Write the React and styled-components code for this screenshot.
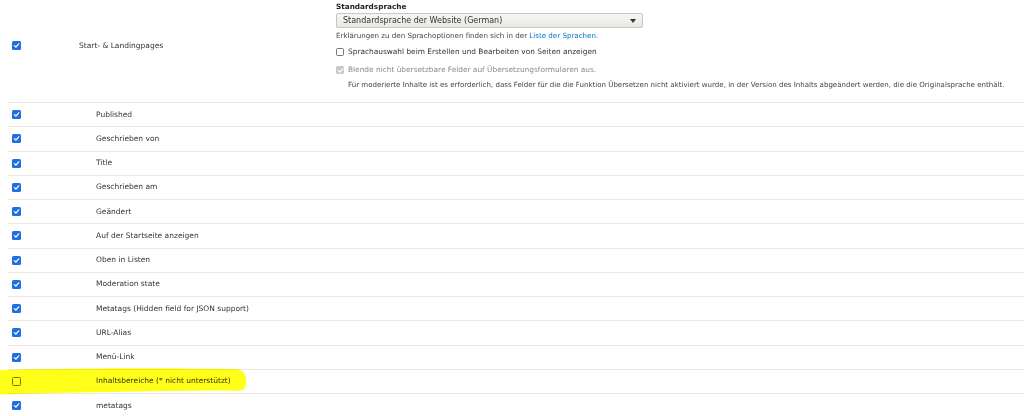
import React from "react";
import styled, { createGlobalStyle, css } from "styled-components";

const Global = createGlobalStyle`
  html, body { margin: 0; padding: 0; background: #fff; }
  body { font-family: "DejaVu Sans", "Liberation Sans", sans-serif; color: #333; overflow: hidden; }
  * { box-sizing: border-box; }
`;

const Page = styled.div`
  position: relative;
  width: 1024px;
  height: 416px;
  overflow: hidden;
  padding-left: 8px;
`;

const Row = styled.div`
  display: grid;
  grid-template-columns: 71px 257px 1fr;
  align-items: center;
  border-bottom: 1px solid #ebe9e4;
  ${(p) =>
    p.$main
      ? css`
          height: 103px;
          padding-bottom: 11px;
        `
      : css`
          height: 24.25px;
        `}
`;

const BoxCell = styled.div`
  display: flex;
  align-items: center;
  padding-left: 4px;
`;

const Label = styled.div`
  font-size: 7.5px;
  line-height: 10px;
  color: #333;
  padding-left: ${(p) => (p.$indent ? "17px" : "0")};
  white-space: nowrap;
`;

const Box = styled.span`
  display: inline-flex;
  align-items: center;
  justify-content: center;
  width: ${(p) => p.$size || 9}px;
  height: ${(p) => p.$size || 9}px;
  border-radius: 1.5px;
  flex: none;
  ${(p) =>
    p.$checked
      ? css`
          background: ${p.$disabled ? "#c9c9c9" : "#1f6fe1"};
          border: none;
        `
      : css`
          background: #fff;
          border: 1px solid #767676;
        `}
`;

const Check = ({ checked, disabled, size }) => (
  <Box $checked={checked} $disabled={disabled} $size={size}>
    {checked && (
      <svg width="7" height="7" viewBox="0 0 10 10">
        <path d="M2 5.2 L4.1 7.3 L8.2 2.6" fill="none" stroke="#fff" strokeWidth="1.8" strokeLinecap="round" strokeLinejoin="round" />
      </svg>
    )}
  </Box>
);

const Settings = styled.div`
  display: flex;
  flex-direction: column;
  padding-top: 2px;
  align-self: start;
`;

const FieldTitle = styled.div`
  font-size: 7.3px;
  font-weight: bold;
  line-height: 10px;
  color: #222;
`;

const Select = styled.div`
  margin-top: 1px;
  width: 307px;
  height: 15px;
  border: 1px solid #c8c6bf;
  border-radius: 2px;
  background: linear-gradient(#f7f6f2, #e9e8e2);
  display: flex;
  align-items: center;
  justify-content: space-between;
  padding: 0 6px 0 6px;
  font-size: 8px;
  color: #333;
`;

const Arrow = styled.span`
  width: 0;
  height: 0;
  border-left: 3px solid transparent;
  border-right: 3px solid transparent;
  border-top: 4px solid #333;
  margin-top: 1px;
`;

const Help = styled.div`
  margin-top: ${(p) => p.$mt || 0}px;
  padding-left: ${(p) => p.$pl || 0}px;
  font-size: ${(p) => p.$fs || 7.1}px;
  line-height: 10px;
  color: #444;
  white-space: nowrap;
`;

const Link = styled.a`
  color: #0074bd;
  text-decoration: none;
`;

const Option = styled.label`
  display: flex;
  align-items: center;
  gap: 4px;
  margin-top: ${(p) => p.$mt}px;
  font-size: 7.4px;
  line-height: 10px;
  color: ${(p) => (p.$disabled ? "#8a8a8a" : "#333")};
  white-space: nowrap;
`;

const Highlight = styled.svg`
  position: absolute;
  left: 0;
  top: 366px;
  mix-blend-mode: multiply;
  pointer-events: none;
`;

const fields = [
  ["Published", true],
  ["Geschrieben von", true],
  ["Title", true],
  ["Geschrieben am", true],
  ["Geändert", true],
  ["Auf der Startseite anzeigen", true],
  ["Oben in Listen", true],
  ["Moderation state", true],
  ["Metatags (Hidden field for JSON support)", true],
  ["URL-Alias", true],
  ["Menü-Link", true],
  ["Inhaltsbereiche (* nicht unterstützt)", false],
  ["metatags", true],
];

export default function App() {
  return (
    <>
      <Global />
      <Page>
        <Row $main>
          <BoxCell>
            <Check checked />
          </BoxCell>
          <Label>Start- &amp; Landingpages</Label>
          <Settings>
            <FieldTitle>Standardsprache</FieldTitle>
            <Select>
              <span>Standardsprache der Website (German)</span>
              <Arrow />
            </Select>
            <Help $mt={3}>
              Erklärungen zu den Sprachoptionen finden sich in der <Link href="#">Liste der Sprachen</Link>.
            </Help>
            <Option $mt={6}>
              <Check size={8} />
              Sprachauswahl beim Erstellen und Bearbeiten von Seiten anzeigen
            </Option>
            <Option $mt={8} $disabled>
              <Check size={8} checked disabled />
              Blende nicht übersetzbare Felder auf Übersetzungsformularen aus.
            </Option>
            <Help $mt={5} $pl={12} $fs={7.05}>
              Für moderierte Inhalte ist es erforderlich, dass Felder für die die Funktion Übersetzen nicht aktiviert wurde, in der Version des Inhalts abgeändert werden, die die Originalsprache enthält.
            </Help>
          </Settings>
        </Row>
        {fields.map(([name, checked]) => (
          <Row key={name}>
            <BoxCell>
              <Check checked={checked} />
            </BoxCell>
            <Label $indent>{name}</Label>
            <div />
          </Row>
        ))}
        <Highlight width="260" height="32" viewBox="0 0 260 32">
          <path
            d="M0 4 C50 2.5 140 1.5 236 3 C246 3.5 248 14 245 22 C242 26 234 24.5 220 24.5 C150 25 70 26.5 0 28.5 Z"
            fill="#ffff1a"
          />
        </Highlight>
      </Page>
    </>
  );
}
